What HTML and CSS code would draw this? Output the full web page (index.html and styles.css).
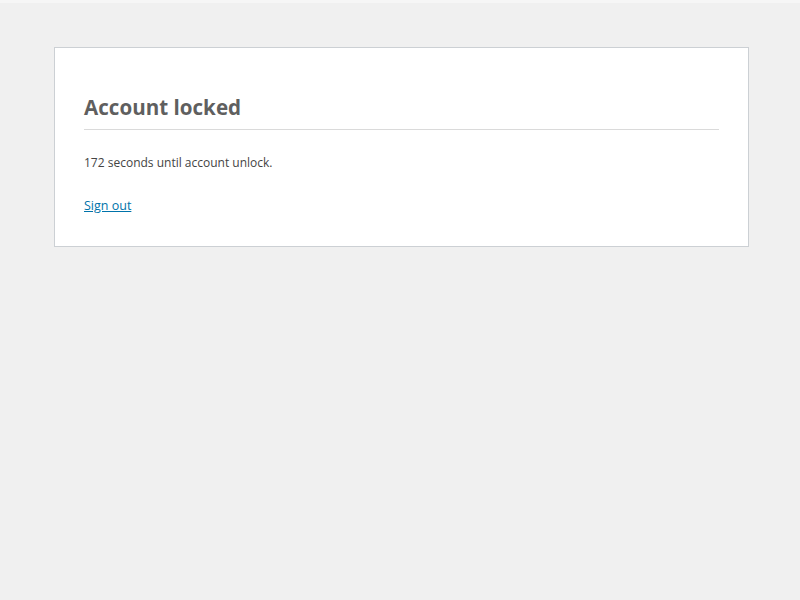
FILE: index.html
```html
<!DOCTYPE html>
<html lang="en">
<head>
<meta charset="utf-8">
<title>Account locked</title>
<link rel="stylesheet" href="styles.css">
</head>
<body>
<div class="topstrip"></div>
<main class="card">
  <h1 class="title">Account locked</h1>
  <p class="message">172 seconds until account unlock.</p>
  <p class="actions"><a class="link" href="#">Sign out</a></p>
</main>
</body>
</html>
```

FILE: styles.css
```css
html { background: #f0f0f0; }
body {
  margin: 0;
  font-family: "Open Sans", "Noto Sans", sans-serif;
  color: #444;
}
.topstrip { height: 3px; background: #f6f6f6; }
.card {
  box-sizing: border-box;
  width: 695px;
  margin: 44px 0 0 54px;
  padding: 44px 29px 30px;
  background: #fff;
  border: 1px solid #ccd0d4;
}
.title {
  margin: 0;
  padding-bottom: 7px;
  border-bottom: 1px solid #dadada;
  font-size: 20.6px;
  font-weight: 700;
  color: #5f5f5f;
  line-height: 30px;
}
.message {
  margin: 23px 0 0;
  font-size: 12px;
  line-height: 20px;
}
.actions {
  margin: 23px 0 0;
  font-size: 12.5px;
  line-height: 20px;
}
.link { color: #0073aa; }
```
